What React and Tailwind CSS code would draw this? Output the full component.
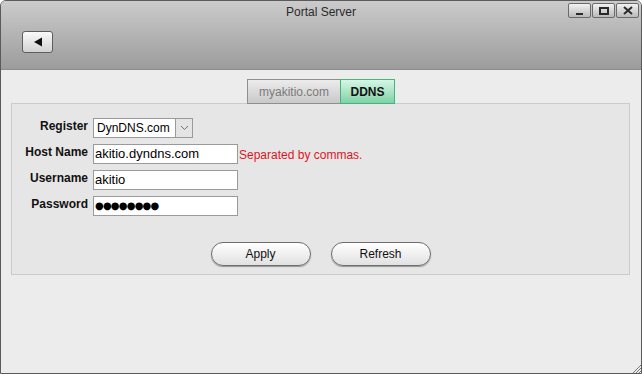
import React from 'react';

const font = { fontFamily: '"Liberation Sans", Arial, sans-serif' };

const WinButton = ({ children }) => (
  <div className="w-[23px] h-[15px] rounded-[2px] border border-[#6a6a6a] bg-gradient-to-b from-[#f2f2f2] to-[#b9b9b9] flex items-center justify-center">
    {children}
  </div>
);

const Field = ({ label, children }) => (
  <div className="flex items-start">
    <div className="w-[69px] text-right text-[12px] font-bold text-[#111] pt-[1px] pr-[5px] leading-[14px] whitespace-nowrap">{label}</div>
    {children}
  </div>
);

const TextBox = ({ value }) => (
  <div className="w-[145px] h-[20px] border border-[#9a9a9a] bg-white pl-[1px] text-[13px] leading-[18px] text-black">{value}</div>
);

const PillButton = ({ label }) => (
  <button className="w-[100px] h-[24px] rounded-full border border-[#6d6d6d] bg-gradient-to-b from-white to-[#e1e1e1] shadow-[0_1px_1px_rgba(0,0,0,0.35)] text-[12px] text-[#111]">
    {label}
  </button>
);

export default function App() {
  return (
    <div style={font} className="w-[642px] h-[374px] bg-[#ececec] border border-[#5a5a5a] rounded-t-[6px] overflow-hidden flex flex-col relative">
      {/* Title bar */}
      <div className="h-[69px] bg-gradient-to-b from-[#cbcbcb] to-[#9c9c9c] flex flex-col shrink-0 border-b border-[#8c8c8c]">
        <div className="relative h-[21px] flex items-center justify-center">
          <span className="text-[12px] text-[#2a2a2a] leading-none">Portal Server</span>
          <div className="absolute right-[2px] top-[2px] flex gap-[1px]">
            <WinButton>
              <div className="w-[7px] h-[2px] bg-[#2a2a2a] mt-[6px]" />
            </WinButton>
            <WinButton>
              <div className="w-[10px] h-[8px] border-2 border-[#2a2a2a] border-t-[2px]" />
            </WinButton>
            <WinButton>
              <svg width="10" height="9" viewBox="0 0 10 9">
                <path d="M1 1L9 8M9 1L1 8" stroke="#2a2a2a" strokeWidth="2" />
              </svg>
            </WinButton>
          </div>
        </div>
        <div className="pl-[21px] pt-[9px]">
          <button className="w-[31px] h-[22px] rounded-[3px] border border-[#5e5e5e] bg-gradient-to-b from-[#fafafa] to-[#d2d2d2] flex items-center justify-center">
            <svg width="10" height="10" viewBox="0 0 10 10">
              <path d="M1 5L9 0.5V9.5Z" fill="#111" />
            </svg>
          </button>
        </div>
      </div>

      {/* Body */}
      <div className="flex-1 flex flex-col pt-[9px]">
        <div className="flex justify-center relative z-10">
          <div className="w-[94px] h-[25px] border border-[#8f8f8f] bg-gradient-to-b from-[#ececec] to-[#c9c9c9] text-[12px] text-[#7a7a7a] flex items-center justify-center">
            myakitio.com
          </div>
          <div className="w-[55px] h-[25px] border border-[#45b47c] bg-gradient-to-b from-[#d6f5e6] to-[#7fd2a8] text-[12px] font-bold text-[#111] flex items-center justify-center -ml-[1px]">
            DDNS
          </div>
        </div>
        <div className="mx-[10px] mr-[11px] -mt-[1px] h-[172px] border border-[#cbcbcb] bg-[#e6e6e6] flex flex-col">
          <div className="pl-[12px] pt-[14px] flex flex-col gap-[6px]">
            <Field label="Register">
              <div className="w-[100px] h-[20px] border border-[#9a9a9a] bg-white flex">
                <span className="flex-1 pl-[3px] text-[12px] leading-[18px] text-black">DynDNS.com</span>
                <div className="w-[17px] h-full border-l border-[#9a9a9a] bg-[#e4e4e4] flex items-center justify-center">
                  <svg width="9" height="6" viewBox="0 0 9 6">
                    <path d="M1 1L4.5 4.5L8 1" stroke="#707070" strokeWidth="1" fill="none" />
                  </svg>
                </div>
              </div>
            </Field>
            <Field label="Host Name">
              <TextBox value="akitio.dyndns.com" />
              <span className="text-[12px] text-[#e0141e] pl-[1px] pt-[4px] leading-[14px]">Separated by commas.</span>
            </Field>
            <Field label="Username">
              <TextBox value="akitio" />
            </Field>
            <Field label="Password">
              <div className="w-[145px] h-[20px] border border-[#9a9a9a] bg-white pl-[1px] text-[10px] leading-[18px] text-black tracking-[-0.8px]" style={{ fontFamily: '"DejaVu Sans", sans-serif' }}>
                ●●●●●●●●
              </div>
            </Field>
          </div>
          <div className="flex justify-center gap-[20px] pt-[26px]">
            <PillButton label="Apply" />
            <PillButton label="Refresh" />
          </div>
        </div>
      </div>

      {/* resize grip */}
      <svg className="absolute right-0 bottom-0" width="10" height="10" viewBox="0 0 10 10">
        <path d="M10 2L2 10M10 5L5 10M10 8L8 10" stroke="#777" strokeWidth="1" />
      </svg>
    </div>
  );
}
